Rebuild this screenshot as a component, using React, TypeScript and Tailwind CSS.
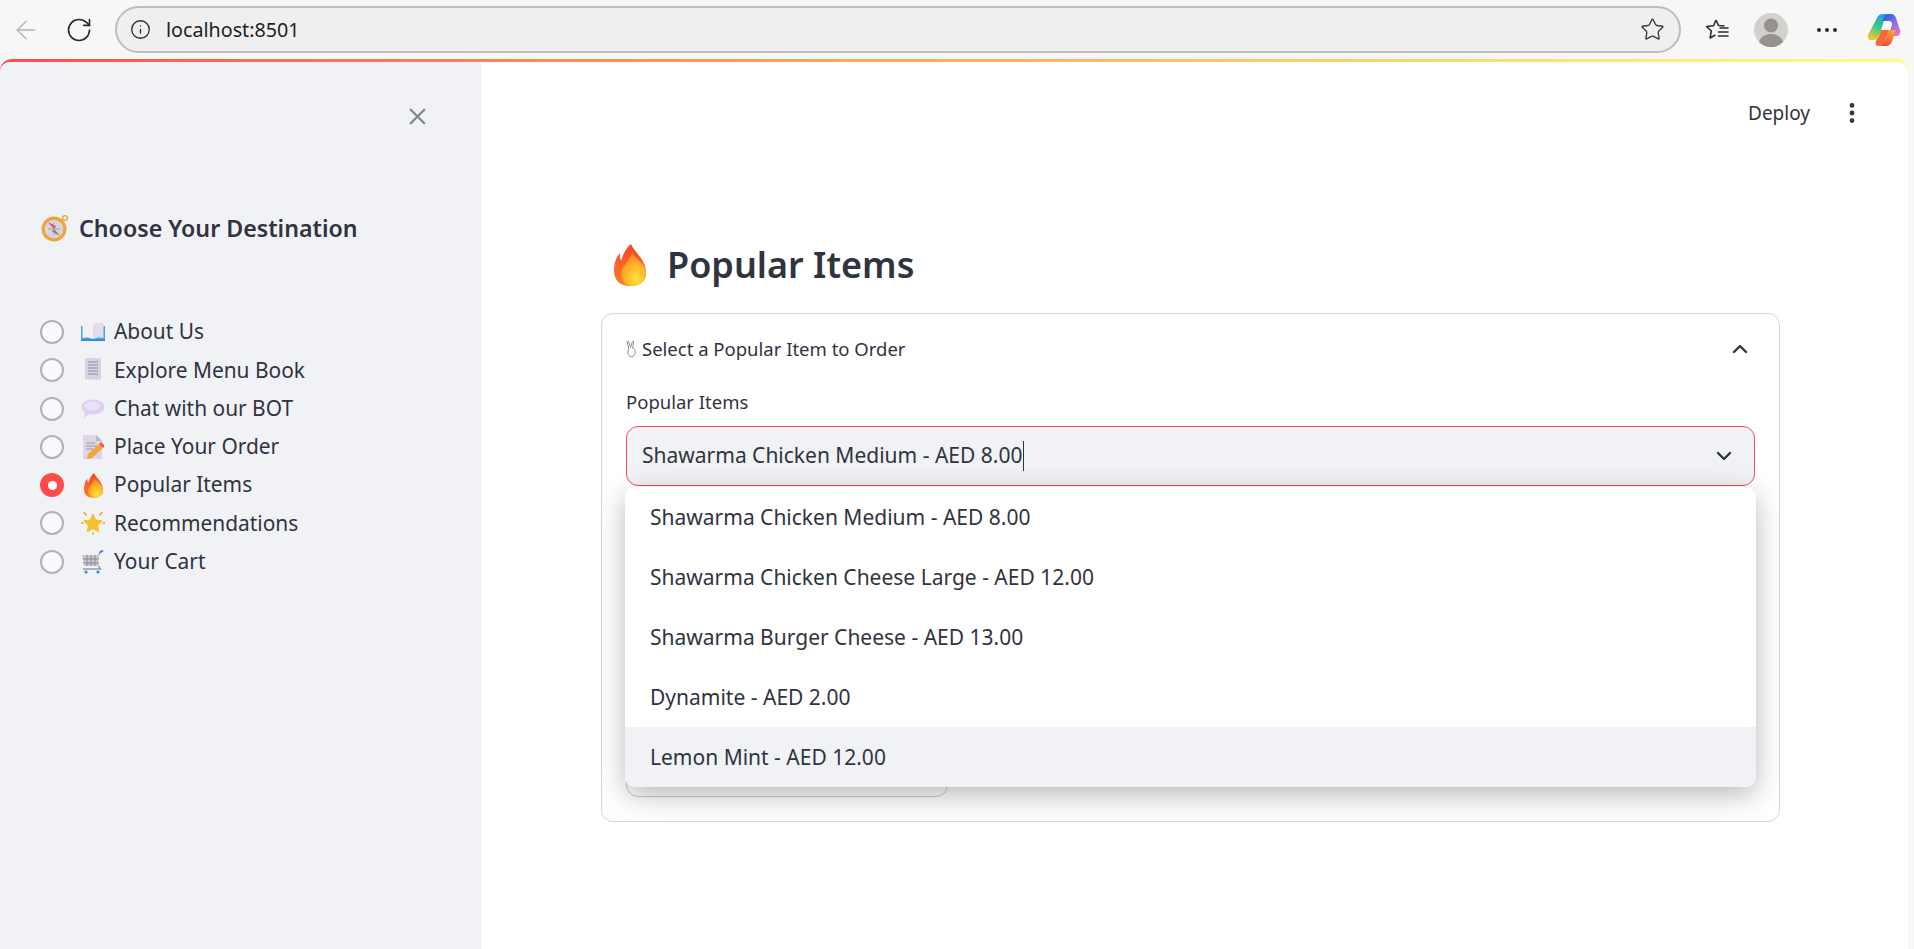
import React from 'react';
import { ArrowLeft, RotateCw, Info, Star, X, ChevronUp, ChevronDown, EllipsisVertical } from 'lucide-react';

const FlameIcon: React.FC<{ className?: string }> = ({ className }) => (
  <svg viewBox="0 0 32 42" className={className}>
    <defs>
      <linearGradient id="flameOuter" x1="0.5" y1="0" x2="0.5" y2="1">
        <stop offset="0" stopColor="#f6402c" />
        <stop offset="0.5" stopColor="#f9652a" />
        <stop offset="1" stopColor="#f58220" />
      </linearGradient>
      <radialGradient id="flameInner" cx="0.6" cy="0.8" r="0.8">
        <stop offset="0" stopColor="#ffe23d" />
        <stop offset="0.55" stopColor="#ffb125" />
        <stop offset="1" stopColor="#fb7a1c" />
      </radialGradient>
    </defs>
    <path d="M17 0C20 8 32 15 32 29C32 37 25 42 16 42C7 42 0 37 0 27C0 20 2 13 6 9C5.500 13 6 15 7.500 16C9 10 12 4 17 0Z" fill="url(#flameOuter)" />
    <path d="M18 8C21 15 32 19 32 30C32 37 26 42 19 42C11 42 7 37 7 30C7 22 16 18 18 8Z" fill="url(#flameInner)" />
  </svg>
);

const CompassIcon = () => (
  <svg viewBox="0 0 28 28" className="h-[28px] w-[28px]">
    <circle cx="24" cy="4" r="2.4" fill="none" stroke="#e8a33a" strokeWidth="1.3" />
    <circle cx="13" cy="15" r="12.5" fill="#eda53a" />
    <circle cx="13" cy="15" r="9.3" fill="#d9d3dc" />
    <path d="M13 15L7 8L15 12.5Z" fill="#e8365d" />
    <path d="M13 15L19 22L11 17.5Z" fill="#77727e" />
    <path d="M13 9v12M7 15h12" stroke="#a29dab" strokeWidth="1" />
  </svg>
);

const BookIcon = () => (
  <svg viewBox="0 0 24 20" className="h-[20px] w-[24px]">
    <path d="M0 4h24v14H0z" fill="#4aa3e0" />
    <path d="M1.5 1C5 0 9 .5 12 2.5V17C9 15.5 5 15 1.5 16Z" fill="#f3f0f6" />
    <path d="M22.5 1C19 0 15 .5 12 2.5V17C15 15.5 19 15 22.5 16Z" fill="#e2dde8" />
    <path d="M0 17.5h24V19H0z" fill="#2f86d0" />
  </svg>
);

const ReceiptIcon = () => (
  <svg viewBox="0 0 20 24" className="h-[24px] w-[20px]">
    <path d="M2 0h16v22l-2-1-2 1-2-1-2 1-2-1-2 1-2-1-2 1Z" fill="#d9d2e4" />
    <path d="M5 4h10M5 7h10M5 10h10M5 13h10M5 16h10" stroke="#8f8a9b" strokeWidth="1" />
  </svg>
);

const BubbleIcon = () => (
  <svg viewBox="0 0 24 20" className="h-[20px] w-[24px]">
    <ellipse cx="12" cy="8" rx="11.5" ry="7.5" fill="#dbd0f0" />
    <path d="M4 12L3 19L10 14Z" fill="#dbd0f0" />
    <ellipse cx="11" cy="7" rx="8" ry="4.5" fill="#e9e2f7" />
  </svg>
);

const MemoIcon = () => (
  <svg viewBox="0 0 22 24" className="h-[24px] w-[22px]">
    <path d="M1 0h13l6 6v18H1Z" fill="#ddd6e6" />
    <path d="M14 0l6 6h-6Z" fill="#bdb5c9" />
    <path d="M4 8h9M4 11h11M4 14h7" stroke="#9b95a8" strokeWidth="1" />
    <path d="M6 19L17 9l4 4L10 23l-5 1Z" fill="#f6a43a" />
    <path d="M17 9l2-2 4 4-2 2Z" fill="#f0523f" />
  </svg>
);

const GlowingStarIcon = () => (
  <svg viewBox="0 0 24 24" className="h-[24px] w-[24px]">
    <path d="M12 3.5l2.7 5.7 6 .8-4.4 4.2 1.1 6.1L12 17.4l-5.4 2.9 1.1-6.1L3.3 10l6-.8Z" fill="#f5c02f" stroke="#f5c02f" strokeWidth="1.4" strokeLinejoin="round" />
    <path d="M3 1.5l2 2.5M21 1.5l-2 2.5M0 12h2M22 12h2M12 22v2" stroke="#e8a92a" strokeWidth="1.5" strokeLinecap="round" />
  </svg>
);

const CartIcon = () => (
  <svg viewBox="0 0 24 24" className="h-[24px] w-[24px]">
    <path d="M1 5h17l-.5 11H3Z" fill="#c9c6cf" />
    <path d="M2 9h16M2 13h16M6 5v11M10 5v11M14 5v11" stroke="#8f8c96" strokeWidth="1" />
    <path d="M18 5l1-3 3-1.5M17.5 16l2 3H2" fill="none" stroke="#8f9fb5" strokeWidth="1.4" />
    <path d="M19 2.5l3-2" stroke="#3f87d0" strokeWidth="1.6" />
    <circle cx="5" cy="22" r="1.6" fill="#3f87d0" />
    <circle cx="17" cy="22" r="1.6" fill="#3f87d0" />
  </svg>
);

const VictoryIcon = () => (
  <svg viewBox="0 0 10 16" className="h-[18px] w-[11px]" fill="none" stroke="#8e8e95" strokeWidth="0.9">
    <path d="M2.6 8L1 1.5 2.2 1 4.2 6.5 5.8 1 7 1.3 6 7.5C8 7.5 8.6 9 8.4 11C8.2 14 6.8 15 5 15C3 15 1.7 13.6 1.7 11C1.7 9.6 2 8.6 2.6 8Z" />
  </svg>
);

const FavoritesIcon = () => (
  <svg viewBox="0 0 26 26" className="h-[26px] w-[26px]" fill="none" stroke="#2b2b2b" strokeWidth="1.5" strokeLinejoin="round">
    <path d="M12 3l2.6 5.6 6 .4M12 3L9.6 8.7 2.6 9.6 7.4 14 6 21l5.4-3" />
    <path d="M16 11h8M14.5 15h9.5M14.5 19h9.5" strokeLinecap="round" />
  </svg>
);

const AvatarIcon = () => (
  <svg viewBox="0 0 34 34" className="h-[34px] w-[34px]">
    <circle cx="17" cy="17" r="17" fill="#d3d1cd" />
    <circle cx="17" cy="12.5" r="7" fill="#96928c" />
    <path d="M5 29c2-6 7-8 12-8s10 2 12 8c-3 3-7 5-12 5s-9-2-12-5Z" fill="#96928c" />
  </svg>
);

const CopilotLogo = () => (
  <svg viewBox="0 0 34 34" className="h-[34px] w-[34px]">
    <defs>
      <linearGradient id="cpA" x1="0.7" y1="0" x2="0.3" y2="1">
        <stop offset="0" stopColor="#1f9be8" />
        <stop offset="0.5" stopColor="#35c98a" />
        <stop offset="1" stopColor="#f4c72e" />
      </linearGradient>
      <linearGradient id="cpB" x1="0.2" y1="0" x2="0.8" y2="1">
        <stop offset="0" stopColor="#1b5fdc" />
        <stop offset="0.45" stopColor="#8d6be6" />
        <stop offset="1" stopColor="#e470cf" />
      </linearGradient>
      <linearGradient id="cpC" x1="0.7" y1="0" x2="0.2" y2="1">
        <stop offset="0" stopColor="#f3a72e" />
        <stop offset="1" stopColor="#f0443c" />
      </linearGradient>
    </defs>
    <path d="M10 5C11 2.500 13 1 16 1H23C20 1 18.500 3 17.500 6L12.500 22C11.500 25 9.500 27 6.500 27H4C1.500 27 0 25 1 22Z" fill="url(#cpA)" />
    <path d="M17 4C18 2 20 1 22 1H24C26.500 1 28 2.500 29 5L33 17C34 20 32.500 23 29.500 23H21.500L25 12C25.500 10 24 8 22 8H15.500Z" fill="url(#cpB)" />
    <path d="M17 30C15.500 32 14 33 12 33H19C22 33 24 31 25 28.500L29 17H22L17.500 29C17.300 29.500 17.200 29.800 17 30Z" fill="url(#cpC)" />
    <path d="M12 33C9 33 8 31 9 28L10 26C11.500 25 12 23.500 12.500 22L14 17H22L17.500 29C16.500 32 15 33 12 33Z" fill="#f5683a" />
  </svg>
);

const navItems = [
  { label: 'About Us', icon: <BookIcon /> },
  { label: 'Explore Menu Book', icon: <ReceiptIcon /> },
  { label: 'Chat with our BOT', icon: <BubbleIcon /> },
  { label: 'Place Your Order', icon: <MemoIcon /> },
  { label: 'Popular Items', icon: <FlameIcon className="h-[25px] w-[19px]" />, active: true },
  { label: 'Recommendations', icon: <GlowingStarIcon /> },
  { label: 'Your Cart', icon: <CartIcon /> },
];

const options = [
  'Shawarma Chicken Medium - AED 8.00',
  'Shawarma Chicken Cheese Large - AED 12.00',
  'Shawarma Burger Cheese - AED 13.00',
  'Dynamite - AED 2.00',
  'Lemon Mint - AED 12.00',
];

const App: React.FC = () => {
  return (
    <div className="h-[949px] w-[1914px] overflow-hidden bg-[#f7f7f7] font-['Noto_Sans',sans-serif] text-[21px] text-[#31333f]">
      {/* Browser toolbar */}
      <div className="flex h-[59px] items-center pl-[11px]">
        <ArrowLeft size={30} strokeWidth={1.1} className="text-[#b5b5b5]" />
        <RotateCw size={28} strokeWidth={1.4} className="ml-[24px] text-[#2b2b2b]" />
        <div className="ml-[22px] flex h-[47px] w-[1566px] items-center rounded-full border-2 border-[#bdbdbd] bg-[#efefef] pl-[13px] pr-[14px]">
          <Info size={21} strokeWidth={1.5} className="text-[#2b2b2b]" />
          <span className="ml-[15px] flex-1 text-[19.7px] text-[#1f1f1f]">localhost:8501</span>
          <Star size={25} strokeWidth={1.3} className="text-[#3a3a3a]" />
        </div>
        <div className="ml-[23px]"><FavoritesIcon /></div>
        <div className="ml-[24px]"><AvatarIcon /></div>
        <div className="ml-[29px] flex gap-[4px]">
          <span className="h-[4px] w-[4px] rounded-full bg-[#2b2b2b]" />
          <span className="h-[4px] w-[4px] rounded-full bg-[#2b2b2b]" />
          <span className="h-[4px] w-[4px] rounded-full bg-[#2b2b2b]" />
        </div>
        <div className="ml-[30px]"><CopilotLogo /></div>
      </div>

      {/* Streamlit page */}
      <div className="mr-[6px] h-[890px] rounded-t-[12px] bg-gradient-to-r from-[#ff4b4b] to-[#fffd80] pt-[3px]">
        <div className="flex h-full overflow-hidden rounded-t-[10px] bg-white">
          <aside className="w-[481px] shrink-0 bg-[#f0f2f6] pl-[40px]">
            <div className="flex justify-end pr-[50px] pt-[41px]">
              <X size={27} strokeWidth={2} className="text-[#808495]" />
            </div>
            <div className="mt-[81px] flex items-center pl-[1px]">
              <CompassIcon />
              <span className="ml-[10px] text-[23.2px] font-semibold">Choose Your Destination</span>
            </div>
            <div className="mt-[67px] flex flex-col">
              {navItems.map((item) => (
                <div key={item.label} className="flex h-[38.3px] items-center">
                  {item.active ? (
                    <span className="flex h-[24px] w-[24px] items-center justify-center rounded-full bg-[#ff4b4b]">
                      <span className="h-[9px] w-[9px] rounded-full bg-white" />
                    </span>
                  ) : (
                    <span className="h-[24px] w-[24px] rounded-full border-2 border-[#b1b1b6] bg-[#fafafc]" />
                  )}
                  <span className="ml-[17px] flex w-[33px] justify-center pr-[9px]">{item.icon}</span>
                  <span className="text-[20.9px]">{item.label}</span>
                </div>
              ))}
            </div>
          </aside>

          <main className="min-w-0 flex-1 pl-[120px] pr-[128px]">
            <div className="-mr-[128px] flex h-[82px] items-center justify-end pr-[43px] pt-[20px]">
              <span className="text-[19px]">Deploy</span>
              <EllipsisVertical size={26} strokeWidth={2.4} className="ml-[29px]" />
            </div>
            <div className="mt-[96px] flex h-[50px] items-center pl-[13px]">
              <FlameIcon className="h-[42px] w-[32px]" />
              <h1 className="ml-[21px] text-[36px] font-semibold">Popular Items</h1>
            </div>
            <section className="relative mt-[23px] h-[509px] rounded-[12px] border border-[#d5d6d9] px-[24px]">
              <div className="flex h-[70px] items-center">
                <VictoryIcon />
                <span className="ml-[5px] text-[18.5px]">Select a Popular Item to Order</span>
                <ChevronUp size={24} strokeWidth={2.4} className="ml-auto mr-[3px]" />
              </div>
              <div className="text-[18.5px] leading-[36px]">Popular Items</div>
              <div className="mt-[6px] flex h-[60px] items-center rounded-[12px] border border-[#ff4b4b] bg-[#f0f2f6] pl-[15px] pr-[18px]">
                <span>Shawarma Chicken Medium - AED 8.00</span>
                <span className="ml-[1px] h-[30px] w-px bg-[#31333f]" />
                <ChevronDown size={24} strokeWidth={2.4} className="ml-auto" />
              </div>
              {/* Button hidden behind the open list */}
              <div className="mt-[251px] h-[60px] w-[322px] rounded-[12px] border border-[#c9cace]" />

              {/* Open dropdown list */}
              <div className="absolute left-[23px] right-[23px] top-[173px] overflow-hidden rounded-[10px] bg-white shadow-[0_8px_28px_rgba(0,0,0,0.28)]">
                {options.map((option, i) => (
                  <div
                    key={option}
                    className={`flex h-[60px] items-center pl-[25px] pt-[1px] ${i === 4 ? 'bg-[#f0f2f6]' : ''}`}
                  >
                    {option}
                  </div>
                ))}
              </div>
            </section>
          </main>
        </div>
      </div>
    </div>
  );
};

export default App;
